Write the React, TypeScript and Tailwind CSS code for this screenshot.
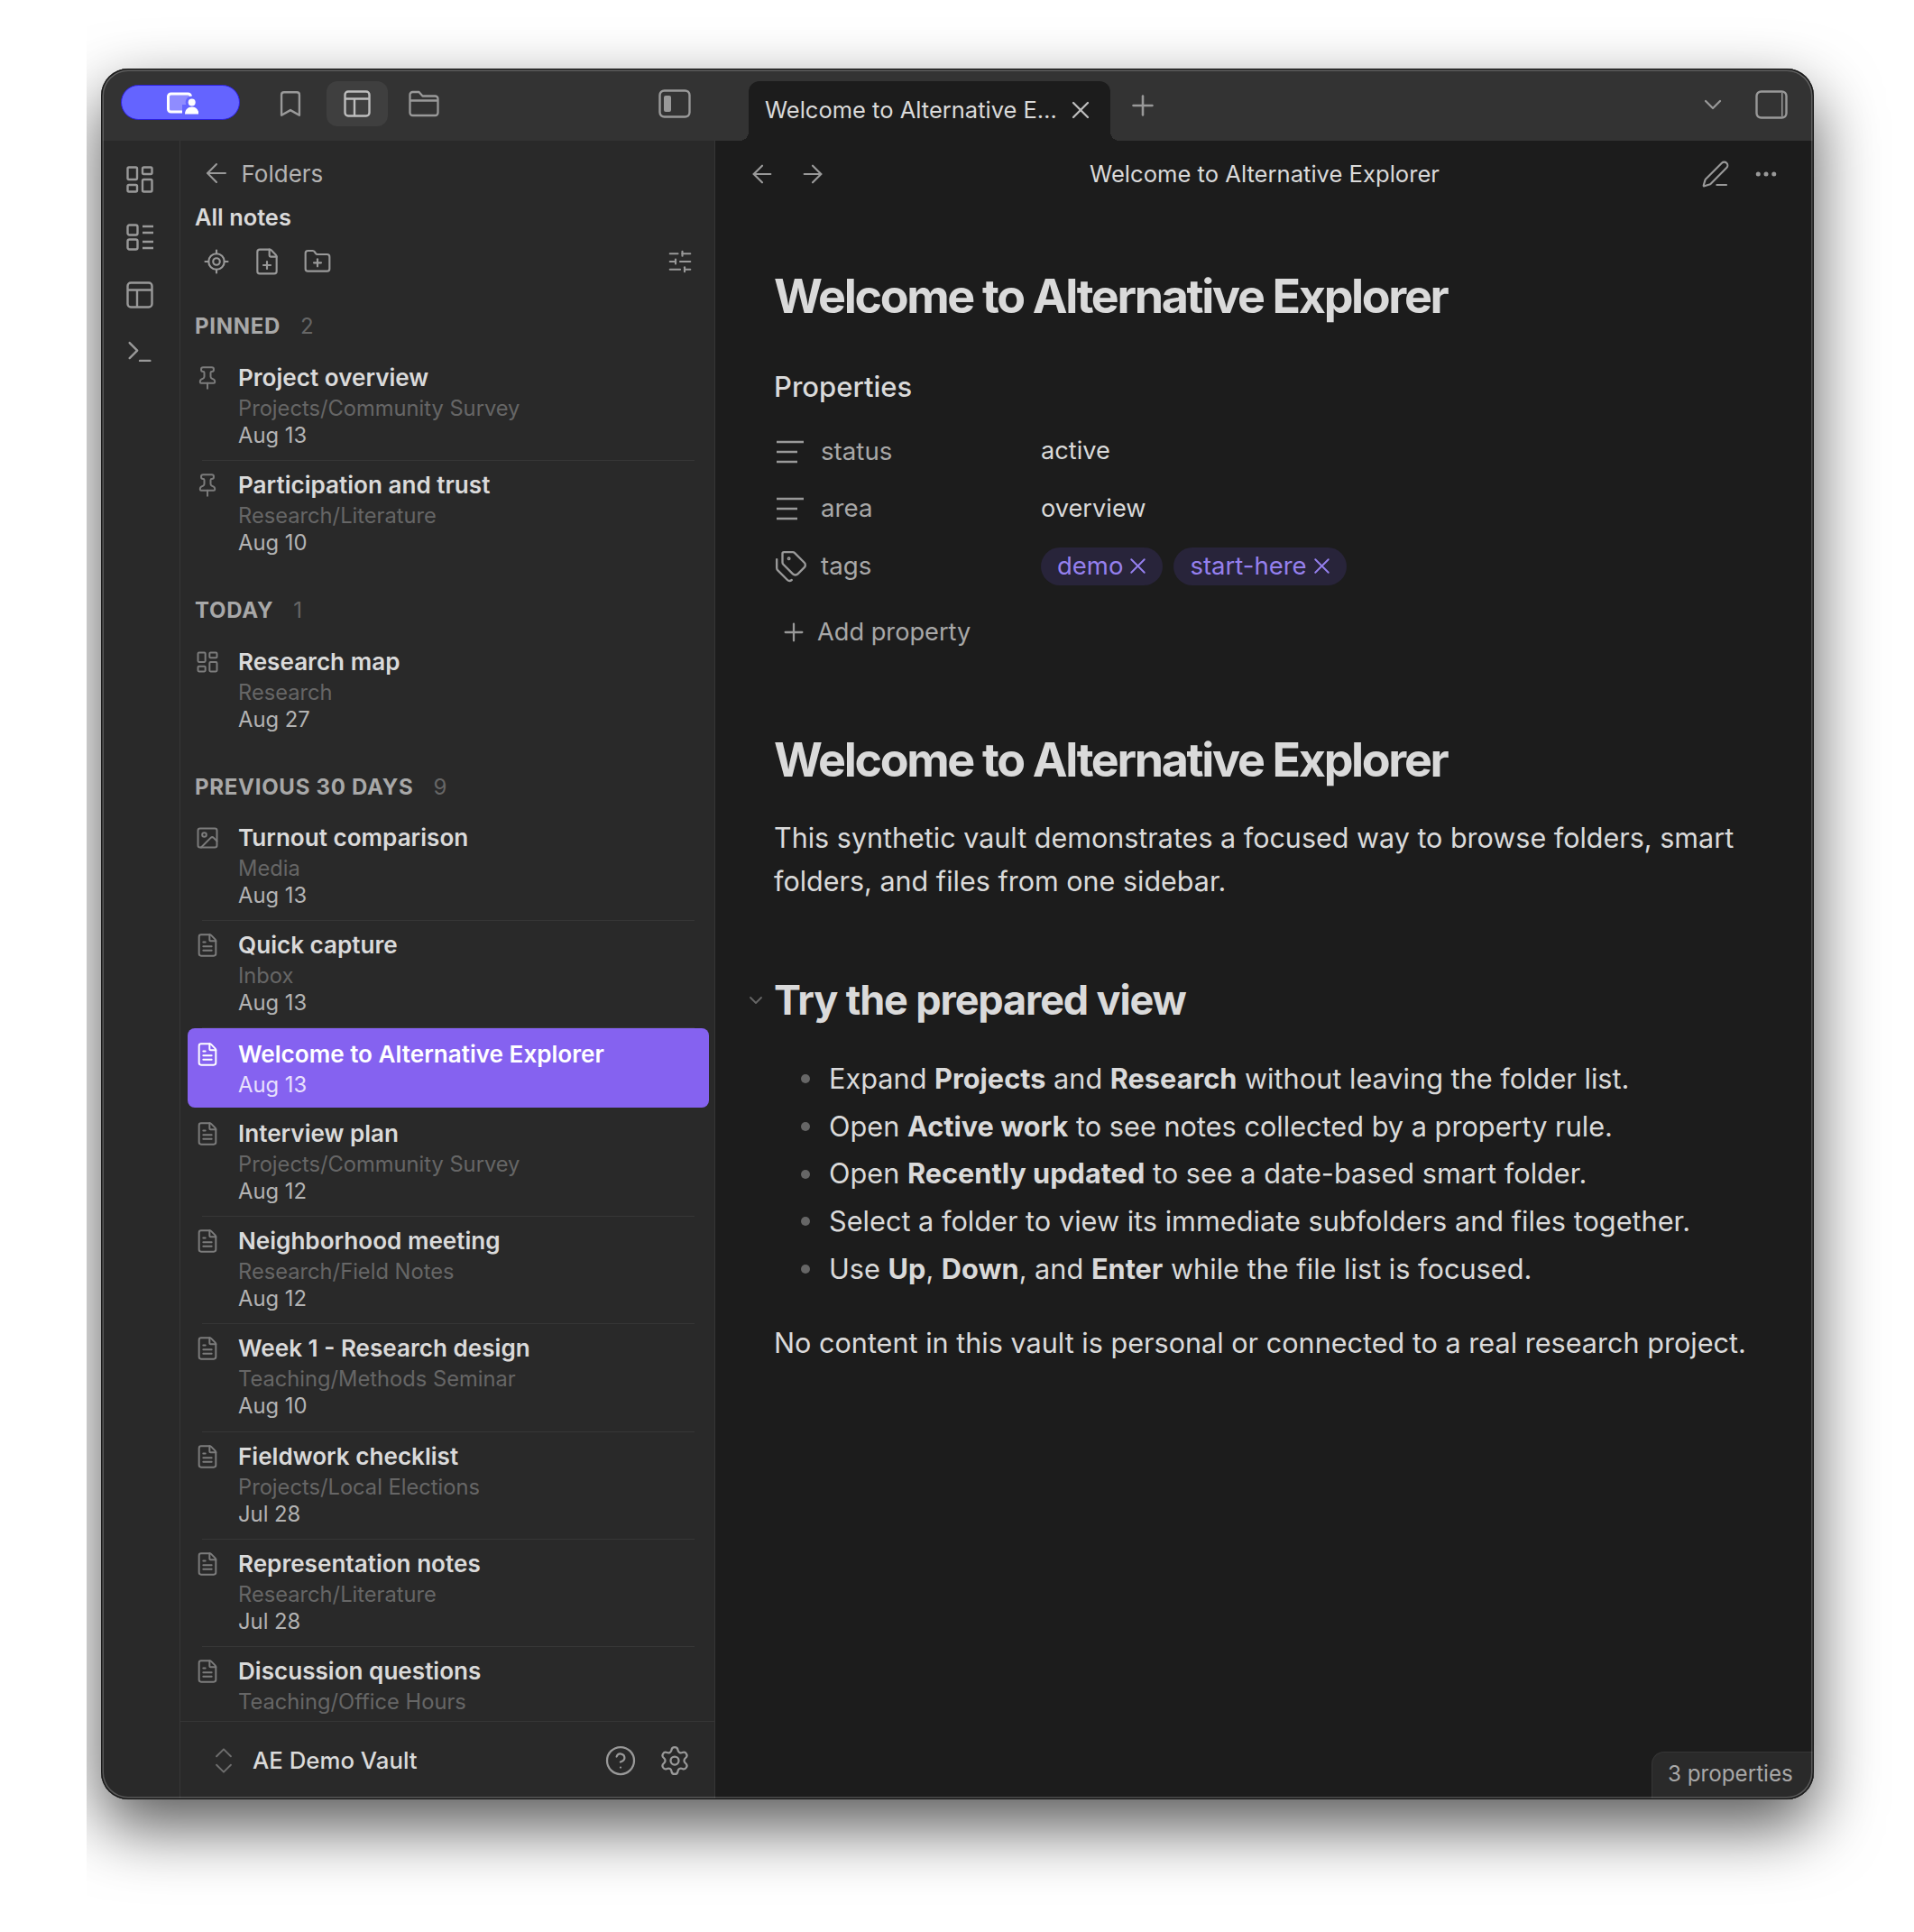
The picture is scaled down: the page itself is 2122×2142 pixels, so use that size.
import React from "react";
import {
  ArrowLeft, ArrowRight, Bookmark, ChevronDown, ChevronsUpDown, CircleHelp, Ellipsis, FilePlus, FileText, FolderPlus,
  Image, LayoutDashboard, LocateFixed, PenLine, Pin, Plus, Settings, SlidersHorizontal, Tags, Terminal, X,
} from "lucide-react";

type Note = { t: string; f?: string; d?: string; k?: "pin" | "map" | "img" | "doc"; sel?: boolean };

const Layout = ({ s = 30, c = "#bdbdbd" }: { s?: number; c?: string }) => (
  <svg width={s} height={s} viewBox="0 0 30 30" fill="none" stroke={c} strokeWidth="2.4" strokeLinejoin="round">
    <rect x="1.5" y="1.5" width="27" height="27" rx="3.5" />
    <path d="M1.5 9.5h27M12 9.5v19" />
  </svg>
);
const Folder = () => (
  <svg width="34" height="30" viewBox="0 0 34 30" fill="none" stroke="#999" strokeWidth="2.3" strokeLinejoin="round">
    <path d="M1.5 5a3 3 0 0 1 3-3h7l4 4.5h14a3 3 0 0 1 3 3V25a3 3 0 0 1-3 3h-25a3 3 0 0 1-3-3z" />
    <path d="M1.5 11.5h31" />
  </svg>
);
const SideToggle = ({ right = false }: { right?: boolean }) => (
  <svg width="36" height="32" viewBox="0 0 36 32" fill="none">
    <rect x="1.5" y="1.5" width="33" height="29" rx="5" stroke="#999" strokeWidth="2.4" />
    {right ? <rect x="29" y="3" width="1.5" height="26" fill="#999" /> : <rect x="6" y="7" width="8" height="18" rx="2" fill="#999" />}
  </svg>
);
const TextLines = () => (
  <svg width="30" height="26" viewBox="0 0 30 26" fill="none" stroke="#999" strokeWidth="2.4">
    <path d="M0 2h30M0 13h23M0 24h23" />
  </svg>
);
const ListIcon = () => (
  <svg width="30" height="30" viewBox="0 0 30 30" fill="none" stroke="#999" strokeWidth="2.4" strokeLinejoin="round">
    <rect x="1.5" y="1.5" width="11" height="11" rx="2" />
    <rect x="1.5" y="17.5" width="11" height="11" rx="2" />
    <path d="M18 3h12M18 10h12M18 20h12M18 27h12" />
  </svg>
);
const VaultIcon = () => (
  <svg width="40" height="30" viewBox="0 0 40 30">
    <rect x="6.5" y="5" width="25" height="20" rx="3" fill="#8f8cff" stroke="#fff" strokeWidth="3" />
    <circle cx="32.7" cy="14.5" r="7" fill="#6464ff" />
    <rect x="22" y="17" width="20" height="13" fill="#6464ff" />
    <circle cx="32.7" cy="14.5" r="4" fill="#fff" />
    <path d="M25 27.5c0-5 3.4-8 7.7-8s7.7 3 7.7 8z" fill="#fff" />
  </svg>
);

const noteIcon = (k: Note["k"], c: string) => {
  const p = { size: 28, color: c, strokeWidth: 1.7 };
  if (k === "pin") return <Pin {...p} />;
  if (k === "map") return <LayoutDashboard {...p} />;
  if (k === "img") return <Image {...p} />;
  return <FileText {...p} />;
};

const Row = ({ n, last }: { n: Note; last?: boolean }) =>
  n.sel ? (
    <div className="flex h-[88px] rounded-[8px] bg-[#8562f0] -mt-[0.6px] mb-[2px]">
      <div className="w-[56px] pl-[8px] pt-[15px] shrink-0">{noteIcon(n.k, "#ffffff")}</div>
      <div className="flex flex-col pt-[12px]">
        <div className="h-[34px] leading-[34px] text-[26.1px] font-semibold text-white">{n.t}</div>
        <div className="h-[34px] leading-[34px] text-[23.8px] text-[#e8e0fd]">{n.d}</div>
      </div>
    </div>
  ) : (
    <div className="flex flex-col h-[119.3px]">
      <div className="flex flex-1">
        <div className="w-[56px] pl-[8px] pt-[13px] shrink-0">{noteIcon(n.k, "#7c7c7c")}</div>
        <div className="flex flex-col pt-[10px]">
          <div className="h-[35px] leading-[34px] text-[26.1px] font-semibold text-[#dadada]">{n.t}</div>
          <div className="h-[30px] leading-[31px] text-[23.7px] text-[#666666]">{n.f}</div>
          {n.d && <div className="h-[31px] leading-[32px] text-[23.8px] text-[#b3b3b3]">{n.d}</div>}
        </div>
      </div>
      {!last && <div className="h-px mx-4 bg-[#363636]" />}
    </div>
  );

const Section = ({ label, count, top }: { label: string; count: string; top: string }) => (
  <div className={`flex items-center h-[30px] pl-[8px] gap-[22px] ${top}`}>
    <span className="text-[24px] font-bold text-[#a8a8a8] tracking-[0.03em]">{label}</span>
    <span className="text-[24px] text-[#666666]">{count}</span>
  </div>
);

const pinned: Note[] = [
  { t: "Project overview", f: "Projects/Community Survey", d: "Aug 13", k: "pin" },
  { t: "Participation and trust", f: "Research/Literature", d: "Aug 10", k: "pin" },
];
const recent: Note[] = [
  { t: "Turnout comparison", f: "Media", d: "Aug 13", k: "img" },
  { t: "Quick capture", f: "Inbox", d: "Aug 13" },
  { t: "Welcome to Alternative Explorer", d: "Aug 13", sel: true },
  { t: "Interview plan", f: "Projects/Community Survey", d: "Aug 12" },
  { t: "Neighborhood meeting", f: "Research/Field Notes", d: "Aug 12" },
  { t: "Week 1 - Research design", f: "Teaching/Methods Seminar", d: "Aug 10" },
  { t: "Fieldwork checklist", f: "Projects/Local Elections", d: "Jul 28" },
  { t: "Representation notes", f: "Research/Literature", d: "Jul 28" },
  { t: "Discussion questions", f: "Teaching/Office Hours" },
];

const Tag = ({ t }: { t: string }) => (
  <span className="flex items-center h-[42px] rounded-full bg-[#28243a] pl-[18px] pr-[13px] gap-[2px] text-[27.5px] text-[#9580ee]">
    {t}
    <X size={29} color="#9580ee" strokeWidth={1.6} />
  </span>
);

const Prop = ({ icon, k, children }: { icon: React.ReactNode; k: string; children: React.ReactNode }) => (
  <div className="flex items-center h-[63.5px]">
    <div className="w-[296px] flex items-center">
      <span className="w-[52px] pl-[3px] flex items-center">{icon}</span>
      <span className="text-[27.7px] text-[#a8a8a8]">{k}</span>
    </div>
    <div className="flex items-center gap-[12px] text-[27.2px] text-[#dadada]">{children}</div>
  </div>
);

const H1 = ({ cls }: { cls: string }) => (
  <h1 className={`h-[60px] leading-[60px] text-[52px] font-bold tracking-[-0.045em] text-[#dadada] ${cls}`}>Welcome to Alternative Explorer</h1>
);

const Li = ({ children }: { children: React.ReactNode }) => (
  <li className="flex items-center h-[52.7px] text-[30.7px] text-[#dadada]">
    <span className="w-[10px] h-[10px] rounded-full bg-[#666666] ml-[30px] mr-[21px] shrink-0" />
    <span>{children}</span>
  </li>
);
const B = ({ children }: { children: React.ReactNode }) => <b className="font-bold">{children}</b>;

export default function App() {
  return (
    <div className="w-[2122px] h-[2142px] bg-white pl-[96px] overflow-hidden font-['Inter',sans-serif]">
      <div className="h-full overflow-hidden pl-[16px] pt-[76px]">
        <div className="relative flex flex-col w-[1899px] h-[1919px] rounded-[30px] overflow-hidden bg-[#1c1c1c] shadow-[0_30px_72px_rgba(0,0,0,0.66)]">
          {/* title bar */}
          <div className="flex h-[80px] shrink-0 items-start bg-[#333333]">
            <div className="flex items-start w-[681px] shrink-0">
              <div className="flex items-center justify-center w-[132px] h-[39px] ml-[22px] mt-[18px] rounded-full bg-[#6464ff] border border-[#2c20e0]">
                <VaultIcon />
              </div>
              <div className="flex items-center justify-center w-[68px] h-[50px] mt-[14px] ml-[22px]">
                <Bookmark size={34} color="#999" strokeWidth={1.7} />
              </div>
              <div className="flex items-center justify-center w-[68px] h-[50px] mt-[14px] ml-[6px] rounded-[12px] bg-[#3f3f3f]">
                <Layout />
              </div>
              <div className="flex items-center justify-center w-[68px] h-[50px] mt-[14px] ml-[6px]">
                <Folder />
              </div>
              <div className="flex items-center justify-center w-[68px] h-[50px] mt-[14px] ml-[210px]">
                <SideToggle />
              </div>
            </div>
            <div className="relative flex items-center justify-between w-[401px] h-[66px] mt-[14px] ml-[37px] pl-[18px] pr-[17px] pb-[2px] rounded-t-[12px] bg-[#1c1c1c]">
              <span className="text-[25.5px] text-[#dadada] whitespace-nowrap">Welcome to Alternative E…</span>
              <X size={32} color="#bdbdbd" strokeWidth={1.7} className="shrink-0" />
              <span className="absolute -left-[10px] bottom-0 w-[10px] h-[10px] bg-[radial-gradient(circle_at_0_0,transparent_10px,#1c1c1c_10px)]" />
              <span className="absolute -right-[10px] bottom-0 w-[10px] h-[10px] bg-[radial-gradient(circle_at_100%_0,transparent_10px,#1c1c1c_10px)]" />
            </div>
            <div className="ml-[18px] mt-[23px]">
              <Plus size={36} color="#999" strokeWidth={1.7} />
            </div>
            <div className="ml-auto mt-[24px]">
              <ChevronDown size={32} color="#999" strokeWidth={1.7} />
            </div>
            <div className="ml-[31px] mr-[29px] mt-[24px]">
              <SideToggle right />
            </div>
          </div>

          <div className="flex flex-1 min-h-0">
            {/* ribbon */}
            <div className="flex flex-col items-center w-[88px] shrink-0 pt-[28px] pr-[2px] gap-[34px] bg-[#292929] border-r border-[#363636]">
              <LayoutDashboard size={36} color="#999" strokeWidth={1.6} className="-my-[3px]" />
              <ListIcon />
              <Layout c="#999" />
              <Terminal size={34} color="#999" strokeWidth={1.7} className="-mt-[3px]" />
            </div>

            {/* sidebar */}
            <div className="flex flex-col w-[593px] shrink-0 bg-[#292929] border-r border-[#363636]">
              <div className="flex items-center h-[36px] mt-[18px] pl-[23px] gap-[10.5px] shrink-0">
                <ArrowLeft size={34} color="#999" strokeWidth={1.5} />
                <span className="text-[26px] text-[#b3b3b3]">Folders</span>
              </div>
              <div className="h-[36px] leading-[36px] mt-[13px] pl-[16px] text-[25.4px] font-semibold text-[#dadada] shrink-0">All notes</div>
              <div className="flex items-center h-[36px] mt-[13px] pl-[12px] pr-[10px] shrink-0">
                <span className="flex justify-center w-[56px]"><LocateFixed size={30} color="#999" strokeWidth={1.7} /></span>
                <span className="flex justify-center w-[56px]"><FilePlus size={32} color="#999" strokeWidth={1.6} /></span>
                <span className="flex justify-center w-[56px]"><FolderPlus size={32} color="#999" strokeWidth={1.6} /></span>
                <span className="flex justify-center w-[56px] ml-auto"><SlidersHorizontal size={30} color="#999" strokeWidth={1.7} /></span>
              </div>
              <div className="flex-1 min-h-0 overflow-hidden pl-[8px] pr-[6px]">
                <Section label="PINNED" count="2" top="mt-[39px] mb-[15px]" />
                {pinned.map((n) => <Row key={n.t} n={n} last={n.t.startsWith("Part")} />)}
                <Section label="TODAY" count="1" top="mt-[31px] mb-[15px]" />
                <Row n={{ t: "Research map", f: "Research", d: "Aug 27", k: "map" }} last />
                <Section label="PREVIOUS 30 DAYS" count="9" top="mt-[32px] mb-[14px]" />
                {recent.map((n) => <Row key={n.t} n={n} />)}
              </div>
              <div className="flex items-center h-[87px] shrink-0 border-t border-[#363636] pl-[29px] pr-[26px]">
                <ChevronsUpDown size={38} color="#6e6e6e" strokeWidth={1.2} />
                <span className="ml-[13px] text-[25.8px] font-medium text-[#dadada]">AE Demo Vault</span>
                <CircleHelp size={36} color="#999" strokeWidth={1.5} className="ml-auto" />
                <Settings size={36} color="#999" strokeWidth={1.5} className="ml-[24px]" />
              </div>
            </div>

            {/* editor */}
            <div className="relative flex-1 min-w-0 bg-[#1c1c1c]">
              <div className="flex items-center h-[74px] pr-[4px]">
                <div className="flex items-center w-[129px] pl-[36px] gap-[24px] shrink-0">
                  <ArrowLeft size={32} color="#999" strokeWidth={1.6} />
                  <ArrowRight size={32} color="#999" strokeWidth={1.6} />
                </div>
                <div className="flex-1 text-center text-[25.6px] text-[#dadada]">Welcome to Alternative Explorer</div>
                <div className="flex items-center w-[125px] gap-[16px] shrink-0">
                  <span className="flex justify-center w-[40px]"><PenLine size={32} color="#999" strokeWidth={1.6} /></span>
                  <span className="flex justify-center w-[40px]"><Ellipsis size={30} color="#999" strokeWidth={2} /></span>
                </div>
              </div>
              <div className="pl-[65px] pr-[40px]">
                <H1 cls="mt-[69px]" />
                <div className="h-[40px] leading-[40px] mt-[50px] text-[31px] font-medium text-[#dadada]">Properties</div>
                <div className="mt-[20px]">
                  <Prop icon={<TextLines />} k="status">active</Prop>
                  <Prop icon={<TextLines />} k="area">overview</Prop>
                  <Prop icon={<Tags size={38} color="#999" strokeWidth={1.5} className="-ml-[3px] -my-[4px]" />} k="tags">
                    <Tag t="demo" />
                    <Tag t="start-here" />
                  </Prop>
                </div>
                <div className="flex items-center h-[42px] mt-[20.5px] pl-[6px] gap-[10px] text-[27.2px] text-[#a8a8a8]">
                  <Plus size={32} color="#999" strokeWidth={1.7} />
                  Add property
                </div>
                <H1 cls="mt-[90.5px]" />
                <p className="mt-[32px] max-w-[1100px] text-[30.5px] leading-[48px] text-[#dadada]">
                  This synthetic vault demonstrates a focused way to browse folders, smart folders, and files from one sidebar.
                </p>
                <div className="flex items-center h-[56px] mt-[80px] -ml-[32px]">
                  <span className="flex justify-center w-[32px] pr-[8px]"><ChevronDown size={30} color="#666" strokeWidth={1.8} /></span>
                  <h2 className="text-[45px] font-bold tracking-[-0.025em] text-[#dadada]">Try the prepared view</h2>
                </div>
                <ul className="mt-[33.3px]">
                  <Li>Expand <B>Projects</B> and <B>Research</B> without leaving the folder list.</Li>
                  <Li>Open <B>Active work</B> to see notes collected by a property rule.</Li>
                  <Li>Open <B>Recently updated</B> to see a date-based smart folder.</Li>
                  <Li>Select a folder to view its immediate subfolders and files together.</Li>
                  <Li>Use <B>Up</B>, <B>Down</B>, and <B>Enter</B> while the file list is focused.</Li>
                </ul>
                <p className="mt-[31.3px] text-[30.6px] leading-[48px] text-[#dadada] whitespace-nowrap">
                  No content in this vault is personal or connected to a real research project.
                </p>
              </div>
              <div className="absolute right-0 bottom-0 flex items-center w-[180px] h-[53px] pl-[17px] pb-[3px] rounded-tl-[14px] bg-[#2a2a2a] border-t border-l border-[#363636] text-[24.2px] text-[#a8a8a8]">
                3 properties
              </div>
            </div>
          </div>
          <div className="absolute inset-0 rounded-[30px] pointer-events-none shadow-[inset_0_0_0_1.5px_#1a1a1a,inset_0_0_0_3px_rgba(255,255,255,0.22)]" />
        </div>
      </div>
    </div>
  );
}
